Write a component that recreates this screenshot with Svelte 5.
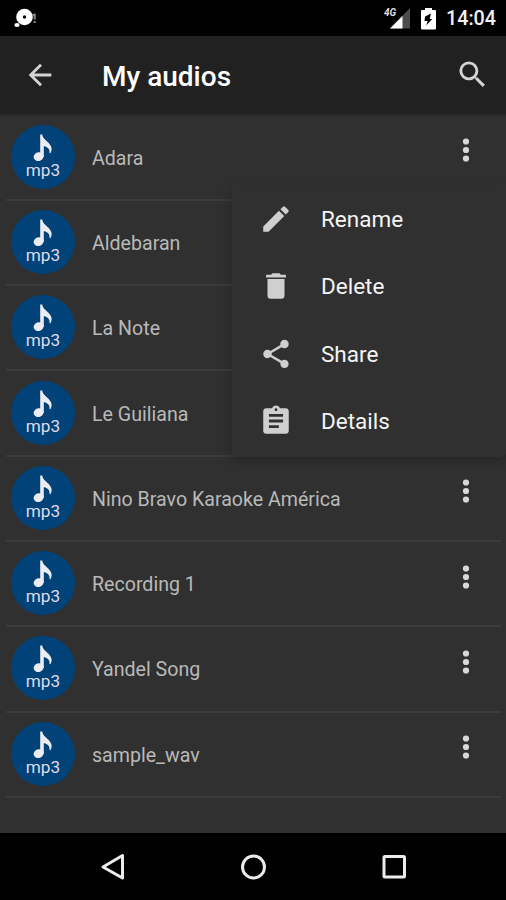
<script lang="ts">
  interface MenuItem {
    label: string;
    icon: string;
  }

  const audios: string[] = [
    'Adara',
    'Aldebaran',
    'La Note',
    'Le Guiliana',
    'Nino Bravo Karaoke América',
    'Recording 1',
    'Yandel Song',
    'sample_wav'
  ];

  const menuItems: MenuItem[] = [
    {
      label: 'Rename',
      icon: 'M3 17.25V21h3.75L17.81 9.94l-3.75-3.75L3 17.25zM20.71 7.04a1 1 0 0 0 0-1.41l-2.34-2.34a1 1 0 0 0-1.41 0l-1.83 1.83 3.75 3.75 1.83-1.83z'
    },
    {
      label: 'Delete',
      icon: 'M6 19c0 1.1.9 2 2 2h8c1.1 0 2-.9 2-2V7H6v12zM19 4h-3.5l-1-1h-5l-1 1H5v2h14V4z'
    },
    {
      label: 'Share',
      icon: 'M18 16.08c-.76 0-1.44.3-1.96.77L8.91 12.7c.05-.23.09-.46.09-.7s-.04-.47-.09-.7l7.05-4.11c.54.5 1.25.81 2.04.81 1.66 0 3-1.34 3-3s-1.34-3-3-3-3 1.34-3 3c0 .24.04.47.09.7L8.04 9.81C7.5 9.31 6.79 9 6 9c-1.66 0-3 1.34-3 3s1.34 3 3 3c.79 0 1.5-.31 2.04-.81l7.12 4.16c-.05.21-.08.43-.08.65 0 1.61 1.31 2.92 2.92 2.92s2.92-1.31 2.92-2.92-1.31-2.92-2.92-2.92z'
    },
    {
      label: 'Details',
      icon: 'M19 3h-4.18C14.4 1.84 13.3 1 12 1s-2.4.84-2.82 2H5c-1.1 0-2 .9-2 2v14c0 1.1.9 2 2 2h14c1.1 0 2-.9 2-2V5c0-1.1-.9-2-2-2zm-7 0c.55 0 1 .45 1 1s-.45 1-1 1-1-.45-1-1 .45-1 1-1zm2 14H7v-2h7v2zm3-4H7v-2h10v2zm0-4H7V7h10v2z'
    }
  ];

  let openIndex = $state(0);
  let menuOpen = $state(true);

  function toggleMenu(index: number) {
    menuOpen = !(menuOpen && openIndex === index);
    openIndex = index;
  }
</script>

<div class="screen">
  <div class="status">
    <svg class="notif" width="26" height="22" viewBox="0 0 26 22">
      <circle cx="11.5" cy="10" r="8.3" fill="#fff" />
      <circle cx="11.5" cy="10" r="1.7" fill="#000" />
      <ellipse cx="4" cy="18" rx="2.6" ry="2" fill="#fff" />
      <path d="M19 8h3M21.7 6.5v6M21.7 14v2" stroke="#888" stroke-width="2" fill="none" />
    </svg>
    <div class="signal">
      <span class="net">4G</span>
      <svg width="20" height="21" viewBox="0 0 20 21">
        <path d="M20 0v20.5H0z" fill="#4c4c4c" />
        <path d="M12.5 8v12.5H0z" fill="#fff" />
      </svg>
    </div>
    <svg class="battery" width="15" height="22" viewBox="0 0 15 22">
      <path d="M4 0h7v2h3q1 0 1 1v17.5q0 1-1 1H1q-1 0-1-1V3q0-1 1-1h3z" fill="#fff" />
      <path d="M10 5.500 4 8.500 3.500 13h3.200l-1.500 4.500 6-6.500H8.600z" fill="#000" />
    </svg>
    <span class="clock">14:04</span>
  </div>

  <header>
    <svg width="34" height="34" viewBox="0 0 24 24">
      <path d="M20 11H7.83l5.59-5.59L12 4l-8 8 8 8 1.41-1.41L7.83 13H20v-2z" />
    </svg>
    <h1>My audios</h1>
    <svg class="search" width="35" height="35" viewBox="0 0 24 24">
      <path d="M15.5 14h-.79l-.28-.27A6.47 6.47 0 0 0 16 9.5 6.5 6.5 0 1 0 9.5 16c1.61 0 3.09-.59 4.23-1.57l.27.28v.79l5 4.99L20.49 19l-4.99-5zm-6 0C7.01 14 5 11.99 5 9.5S7.01 5 9.5 5 14 7.01 14 9.5 11.99 14 9.5 14z" />
    </svg>
  </header>

  <main>
    {#each audios as name, i}
      <div class="row">
        <div class="badge">
          <svg width="20" height="28" viewBox="0 0 20 28">
            <ellipse cx="5.600" cy="22.600" rx="5" ry="4.300" transform="rotate(-20 5.600 22.600)" />
            <path d="M7.200.5h2c.6 4 3.300 5 6.300 8.300 3.400 3.800 4 7 2 10.200-.3.500-1.200.3-1-.4.500-3.400-1.600-5.400-5.700-6.600v11H7.200z" />
          </svg>
          <span>mp3</span>
        </div>
        <span class="name">{name}</span>
        <button class="more" aria-label="More" onclick={() => toggleMenu(i)}>
          <svg width="34" height="34" viewBox="0 0 24 24">
            <circle cx="12" cy="6" r="2.2" />
            <circle cx="12" cy="12" r="2.2" />
            <circle cx="12" cy="18" r="2.2" />
          </svg>
        </button>
        {#if menuOpen && openIndex === i}
          <div class="menu">
            {#each menuItems as item}
              <div class="item">
                <svg width="34" height="34" viewBox="0 0 24 24"><path d={item.icon} /></svg>
                <span>{item.label}</span>
              </div>
            {/each}
          </div>
        {/if}
      </div>
    {/each}
  </main>

  <nav>
    <svg width="30" height="30" viewBox="0 0 30 30"><path d="M24.500 3.500v22.500L5 15z" /></svg>
    <svg width="30" height="30" viewBox="0 0 30 30"><circle cx="14.500" cy="15" r="11" /></svg>
    <svg width="30" height="30" viewBox="0 0 30 30"><rect x="5" y="4.500" width="20.500" height="20.500" rx="1" /></svg>
  </nav>
</div>

<style>
  :global(body) {
    background: #000;
  }

  .screen {
    display: flex;
    flex-direction: column;
    width: 506px;
    height: 900px;
    overflow: hidden;
    background: #303030;
    color: #fff;
    font-family: Roboto, sans-serif;
  }

  .status {
    display: flex;
    align-items: center;
    height: 36px;
    box-sizing: border-box;
    padding: 1px 10px 0 13px;
    background: #000;
  }

  .notif {
    margin-right: auto;
    margin-top: -1px;
  }

  .signal {
    position: relative;
    height: 21px;
    margin-right: 11px;
  }

  .net {
    position: absolute;
    left: -6px;
    top: -1px;
    font-size: 10px;
    line-height: 11px;
    font-weight: 700;
    font-style: italic;
    color: #ddd;
  }

  .battery {
    margin-right: 10px;
  }

  .clock {
    font-size: 19.7px;
    font-weight: 500;
    color: #f2f2f2;
  }

  header {
    display: flex;
    align-items: center;
    height: 79.5px;
    box-sizing: border-box;
    padding: 0 16px 0 23px;
    background: #212121;
    border-bottom: 2px solid #282828;
    fill: #d4d4d4;
  }

  h1 {
    flex: 1;
    margin: 0 0 0 45px;
    padding-top: 3px;
    font-size: 28px;
    font-weight: 500;
  }

  main {
    flex: 1;
  }

  .row {
    position: relative;
    display: flex;
    align-items: center;
    height: 85.3px;
    box-sizing: border-box;
    margin: 0 5px 0 6px;
    padding: 0 18px 1px 5px;
    border-bottom: 2px solid #3b3b3b;
  }

  .badge {
    display: flex;
    flex-direction: column;
    align-items: center;
    width: 64px;
    height: 64px;
    box-sizing: border-box;
    padding-top: 9px;
    border-radius: 50%;
    background: #014279;
    fill: #ececf2;
  }

  .badge span {
    margin-top: -1px;
    font-size: 17.2px;
    line-height: 18px;
    color: #dcdcea;
  }

  .name {
    flex: 1;
    margin-left: 17px;
    padding-top: 3px;
    font-size: 19.6px;
    color: #b9b9b9;
  }

  .more {
    display: flex;
    margin-top: -13px;
    padding: 0;
    border: 0;
    background: none;
    fill: #d8d8d8;
  }

  .menu {
    position: absolute;
    z-index: 1;
    top: 69.5px;
    left: 226px;
    width: 274px;
    background: #303030;
    box-shadow: 0 5px 12px rgba(0, 0, 0, 0.25);
  }

  .item {
    display: flex;
    align-items: center;
    height: 67.5px;
    padding-left: 27px;
    fill: #cfcfcf;
  }

  .item span {
    margin-left: 28px;
    font-size: 22.5px;
    color: #f4f4f4;
  }

  nav {
    display: flex;
    align-items: center;
    justify-content: space-between;
    height: 67px;
    box-sizing: border-box;
    padding: 0 97px 0 98px;
    background: #000;
  }

  nav svg {
    fill: none;
    stroke: #ececec;
    stroke-width: 3;
    stroke-linejoin: round;
  }
</style>
